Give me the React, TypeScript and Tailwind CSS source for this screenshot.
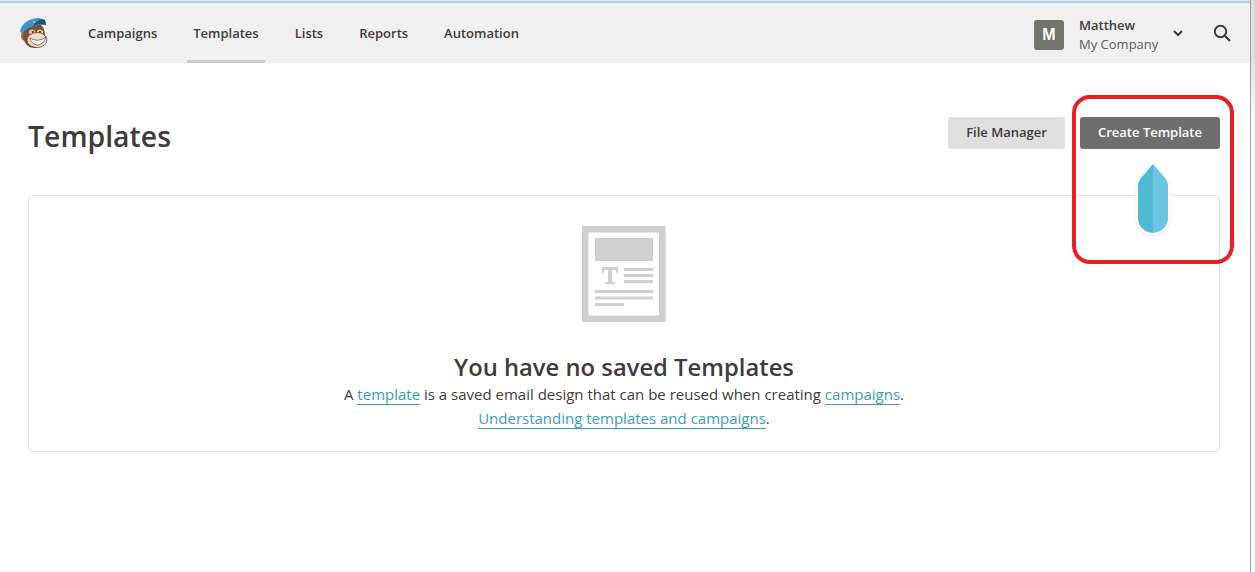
const font = { fontFamily: '"Open Sans", sans-serif' }

function Monkey() {
  return (
    <svg width="30" height="32" viewBox="0 0 30 32">
      <ellipse cx="5.5" cy="19" rx="3.5" ry="4.5" fill="#a5714f" />
      <ellipse cx="15" cy="18" rx="11" ry="13" fill="#7a5039" />
      <ellipse cx="13" cy="15" rx="3.2" ry="2.6" fill="#e3c09c" />
      <ellipse cx="21" cy="15" rx="3.2" ry="2.6" fill="#e3c09c" />
      <ellipse cx="18" cy="23" rx="10" ry="7.5" fill="#f1dcc2" stroke="#5f4030" strokeWidth="0.7" />
      <circle cx="14" cy="15" r="0.9" fill="#2c1d16" />
      <circle cx="21" cy="15" r="0.9" fill="#2c1d16" />
      <path d="M11 21 Q19 26 27 20 Q25 28 18 28 Q12 27 11 21Z" fill="#fff" stroke="#5f4030" strokeWidth="0.7" />
      <path d="M1 14 C3 6 11 1 20 1 L26 3 L27 8 C17 7 8 10 3 17 Z" fill="#3c94d4" />
      <path d="M14 8.5 C18 7.2 23 7 27 8 L26 3 L23 2 C20 3 16 5 14 8.5Z" fill="#23517a" />
      <circle cx="15" cy="5" r="1" fill="#e8c440" />
    </svg>
  )
}

function TemplateIcon() {
  return (
    <svg width="84" height="96" viewBox="0 0 84 96">
      <rect x="3.25" y="3.25" width="77" height="89.5" fill="#fff" stroke="#cfcfcf" strokeWidth="6.5" />
      <rect x="13" y="12" width="58" height="23" fill="#cfcfcf" />
      <path d="M20 41h16v6h-2v-3h-4v12h3v2h-10v-2h3v-12h-4v3h-2z" fill="#cfcfcf" />
      <rect x="42" y="42" width="29" height="3" fill="#cfcfcf" />
      <rect x="42" y="48" width="29" height="3" fill="#cfcfcf" />
      <rect x="42" y="54" width="29" height="3" fill="#cfcfcf" />
      <rect x="13" y="64" width="58" height="3" fill="#cfcfcf" />
      <rect x="13" y="70.5" width="58" height="3" fill="#cfcfcf" />
      <rect x="13" y="77" width="29" height="3" fill="#cfcfcf" />
    </svg>
  )
}

function Beacon() {
  return (
    <svg width="38" height="78" viewBox="0 0 38 78" className="absolute left-[1134px] top-[161px]">
      <path d="M19 0 L34 19 Q37 23 37 27 V58 A18 18 0 0 1 1 58 V27 Q1 23 4 19 Z" fill="#f2f2f2" />
      <path d="M19 0 L33.5 19 Q36 23 36 27 V57 A17 17 0 0 1 2 57 V27 Q2 23 4.5 19 Z" fill="#fff" />
      <path d="M19 3 L7 17 Q4 20 4 25 V57 A15 15 0 0 0 19 72 Z" fill="#50b9d6" />
      <path d="M19 3 L31 17 Q34 20 34 25 V57 A15 15 0 0 1 19 72 Z" fill="#6cc5de" />
    </svg>
  )
}

export default function App() {
  const links = ['Campaigns', 'Templates', 'Lists', 'Reports', 'Automation']
  return (
    <div className="relative h-[572px] w-[1255px] overflow-hidden bg-white text-[#403b3b]" style={font}>
      <div className="h-[3px] border-b-2 border-[#b5cbe6] bg-[#dce8f5]"></div>
      <header className="flex h-[60px] items-center bg-[#f0f0f0] pl-[19px] pr-[24px]">
        <Monkey />
        <nav className="ml-[33px] flex h-full items-stretch">
          {links.map((link) => (
            <a
              key={link}
              className={`mr-[24px] flex items-center border-b-[3px] pt-[5px] pr-[6px] pl-[6px] text-[13px] font-semibold ${link === 'Templates' ? 'border-[#cccccc]' : 'border-transparent'}`}
            >
              {link}
            </a>
          ))}
        </nav>
        <div className="mt-[4px] ml-auto flex items-center">
          <div className="flex h-[30px] w-[30px] items-center justify-center rounded-[3px] bg-[#73736e] text-[16px] font-bold text-white" style={{ fontFamily: '"Liberation Sans", sans-serif' }}>
            M
          </div>
          <div className="ml-[15px] w-[94px] text-[13px] leading-[19px]">
            <div className="font-semibold">Matthew</div>
            <div className="text-[#5f5a5a]">My Company</div>
          </div>
          <svg width="10" height="7" viewBox="0 0 10 7" className="mr-[48px] -mt-[4px]">
            <path d="M1 1l4 4 4-4" fill="none" stroke="#403b3b" strokeWidth="2" />
          </svg>
        </div>
        <svg width="18" height="18" viewBox="0 0 18 18" className="absolute left-[1213px] top-[24px]">
          <circle cx="7.5" cy="7.5" r="5.7" fill="none" stroke="#403b3b" strokeWidth="1.9" />
          <path d="M11.8 11.8 L17 17" stroke="#403b3b" strokeWidth="2.2" />
        </svg>
      </header>
      <main className="px-[28px]">
        <div className="flex items-start pt-[54px]">
          <h1 className="text-[28.4px] leading-[38px] font-semibold">Templates</h1>
          <div className="mr-[7px] ml-auto flex gap-[15px]">
            <button className="h-[32px] w-[117px] rounded-[3px] bg-[#e0e0e0] text-[13px] font-semibold">File Manager</button>
            <button className="h-[32px] w-[140px] rounded-[3px] bg-[#6e6e6e] text-[13px] font-semibold text-white">Create Template</button>
          </div>
        </div>
        <section className="mt-[40px] mr-[7px] flex h-[257px] flex-col items-center rounded-[5px] border border-[#e0e0e0] pt-[30px]">
          <TemplateIcon />
          <h2 className="mt-[31px] text-[23.8px] leading-[29px] font-semibold">You have no saved Templates</h2>
          <p className="text-center text-[15px] leading-[24px]">
            A <a className="border-b border-[#3b9bbd] text-[#3b9bbd]">template</a> is a saved email design that can be reused when creating{' '}
            <a className="border-b border-[#3b9bbd] text-[#3b9bbd]">campaigns</a>.
            <br />
            <a className="border-b border-[#3b9bbd] text-[#3b9bbd]">Understanding templates and campaigns</a>.
          </p>
        </section>
      </main>
      <div className="absolute top-[95px] left-[1072px] h-[169px] w-[162px] rounded-[18px] border-4 border-[#ed1c24]"></div>
      <Beacon />
      <div className="absolute top-0 left-[1250px] h-[572px] w-[5px] border-l-[1.5px] border-[#9aa3ac] bg-linear-to-b from-[#e0e0e0] from-[10%] to-[#fafafa] to-[20%]"></div>
    </div>
  )
}
